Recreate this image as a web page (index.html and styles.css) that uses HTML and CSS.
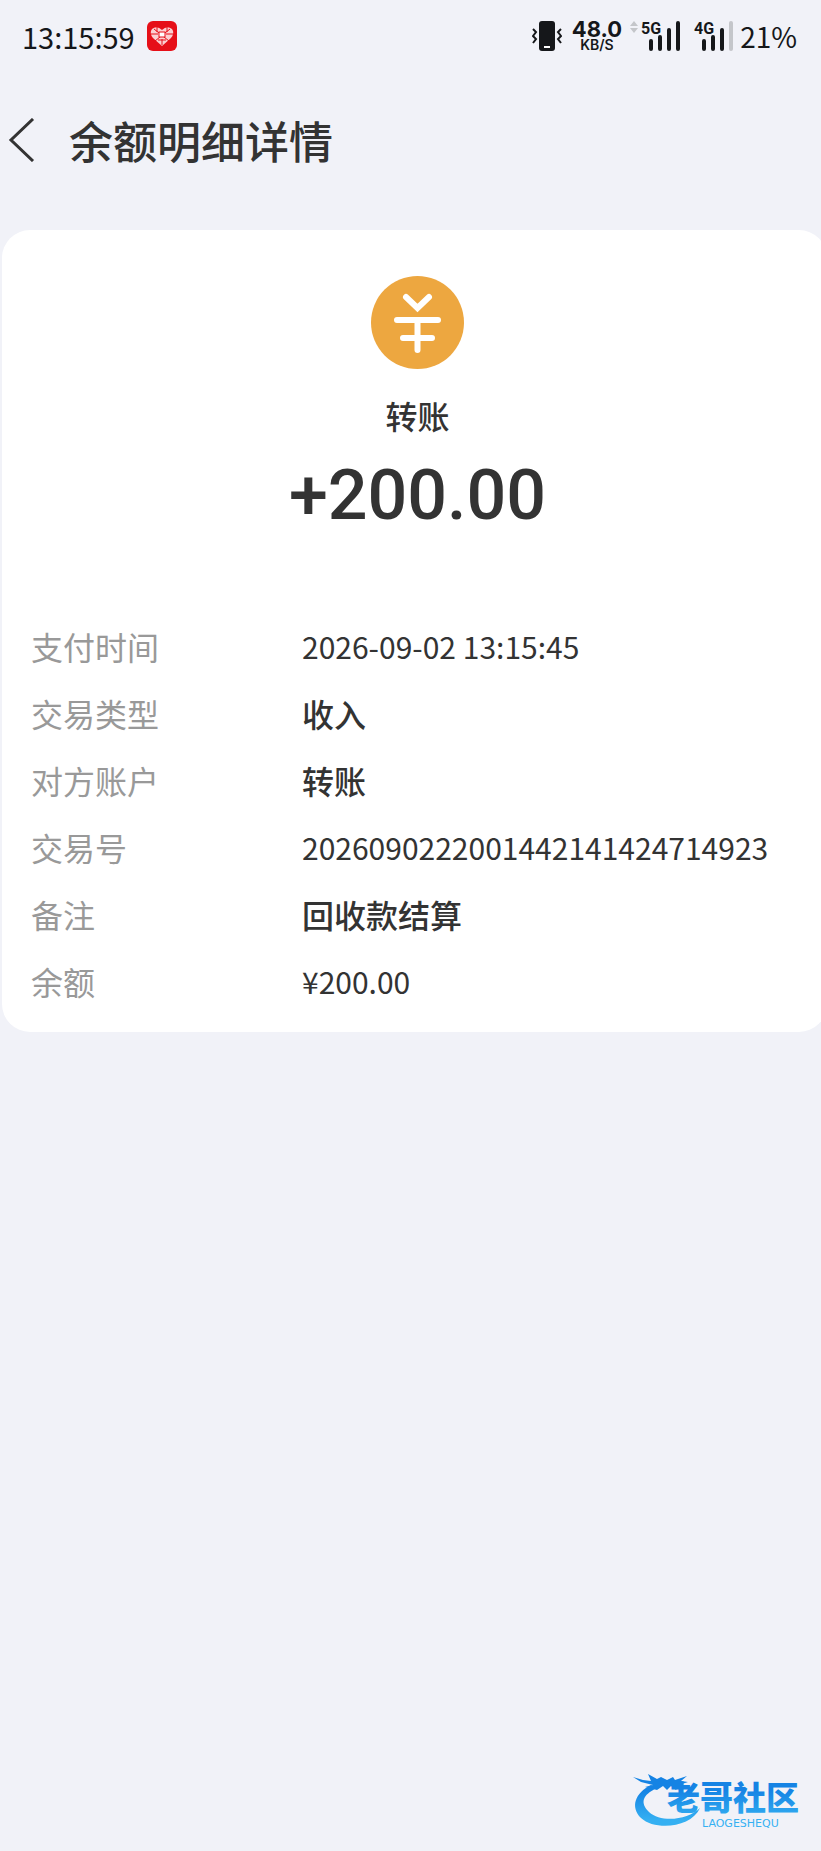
FILE: index.html
```html
<!DOCTYPE html>
<html lang="zh-CN">
<head>
  <meta charset="UTF-8" />
  <meta name="viewport" content="width=device-width, initial-scale=1.0" />
  <title>余额明细详情</title>
  <link rel="stylesheet" href="styles.css">
</head>
<body>

<div class="status-bar">
  <div class="status-left">
    <span class="clock">13:15:59</span>
    <svg class="app-icon" viewBox="0 0 30 30" aria-hidden="true">
      <rect width="30" height="30" rx="6" fill="#e60f18"/>
      <path d="M15 25 L6 17 Q2 12 5 8 Q10 4 15 9 Q20 4 25 8 Q28 12 24 17 Z" fill="#fbd0d2"/>
      <path d="M7 8 L22 20 M23 8 L8 20 M4 13 H11 M19 13 H26 M10 6 V11 M20 6 V11 M11 19 H19 M15 18 V24" stroke="#e60f18" stroke-width="1"/>
      <rect x="12" y="11" width="6" height="5" fill="#fff" stroke="#e60f18" stroke-width="1"/>
    </svg>
  </div>
  <div class="status-right">
    <svg class="vibrate" viewBox="0 0 30 30" aria-hidden="true">
      <rect x="7" y="0" width="16" height="30" rx="3" fill="#15171a"/>
      <rect x="12" y="25" width="6" height="2" fill="#fff"/>
      <path d="M1 8 L4 11 L1 15 L4 18 L1 22 M29 8 L26 11 L29 15 L26 18 L29 22" fill="none" stroke="#15171a" stroke-width="2"/>
    </svg>
    <div class="speed">
      <span class="speed-value">48.0</span>
      <span class="speed-unit">KB/S</span>
    </div>
    <svg class="signal" viewBox="0 0 52 30" aria-hidden="true">
      <path d="M0 5 L4 0 L8 5 Z M0 7 L4 12 L8 7 Z" fill="#c4c6ca"/>
      <text x="11" y="13">5G</text>
      <path d="M21 20 V28 M30 16 V28 M39 9 V28 M48 2 V28" class="bar"/>
    </svg>
    <svg class="signal signal-4g" viewBox="0 0 40 30" aria-hidden="true">
      <text x="0" y="13">4G</text>
      <path d="M10 20 V28 M19 16 V28 M28 9 V28" class="bar"/>
      <path d="M37 2 V28" class="bar bar-off"/>
    </svg>
    <span class="battery">21%</span>
  </div>
</div>

<header>
  <button class="back" type="button" aria-label="返回">
    <svg viewBox="0 0 28 44" aria-hidden="true">
      <path d="M26 1 L4 22 L26 43" fill="none" stroke="#333" stroke-width="3"/>
    </svg>
  </button>
  <h1>余额明细详情</h1>
</header>

<main class="card">
  <div class="summary">
    <svg class="yuan" viewBox="0 0 93 93" aria-hidden="true">
      <circle cx="46.500" cy="46.500" r="46.500" fill="#eda740"/>
      <path d="M35 21 L46.500 32 L58 21 M26 44 H67 M32 62 H61 M46.500 44 V74" fill="none" stroke="#fff" stroke-width="6" stroke-linecap="round"/>
    </svg>
    <p class="kind">转账</p>
    <p class="amount">+200.00</p>
  </div>

  <dl class="details">
    <dt>支付时间</dt>
    <dd class="num">2026-09-02 13:15:45</dd>
    <dt>交易类型</dt>
    <dd>收入</dd>
    <dt>对方账户</dt>
    <dd>转账</dd>
    <dt>交易号</dt>
    <dd class="num">2026090222001442141424714923</dd>
    <dt>备注</dt>
    <dd>回收款结算</dd>
    <dt>余额</dt>
    <dd class="num">¥200.00</dd>
  </dl>
</main>

<footer>
  <svg class="watermark" viewBox="0 0 172 56" role="img" aria-label="老哥社区">
    <defs>
      <linearGradient id="blue" gradientUnits="userSpaceOnUse" x1="0" y1="0" x2="0" y2="56">
        <stop offset="0.3" stop-color="#1583e4"/>
        <stop offset="0.85" stop-color="#35b0f2"/>
      </linearGradient>
    </defs>
    <g fill="url(#blue)">
      <path d="M18 12 C2 20 -3 34 8 45 C22 58 58 55 67 35 C55 47 28 50 16 39 C7 30 9 22 24 15 Z"/>
      <path d="M0 4 L10 7 L18 8 L15 1 L24 6 L28 4 L34 7 L40 4 L42 7 L54 3 L48 8 L55 9 L49 11 L55 15 L46 13 L43 17 L38 13 L34 17 L30 13 L24 17 L12 14 L20 12 L8 9 Z"/>
      <text class="wm-name" x="34" y="37">老哥社区</text>
      <text class="wm-latin" x="69" y="54">LAOGESHEQU</text>
    </g>
  </svg>
</footer>

</body>
</html>
```

FILE: styles.css
```css
* {
  box-sizing: border-box;
}

body {
  margin: 0;
  min-height: 100vh;
  display: flex;
  flex-direction: column;
  overflow-x: hidden;
  background-color: #f1f2f8;
  color: #333;
  font-family: "Noto Sans CJK SC", sans-serif;
}

.status-bar {
  display: flex;
  justify-content: space-between;
  align-items: center;
  height: 72px;
  padding: 0 24px 0 22px;
  color: #15171a;
}

.status-left,
.status-right {
  display: flex;
  align-items: center;
}

.status-left {
  gap: 12px;
}

.clock {
  font-size: 29px;
}

.app-icon,
.vibrate {
  width: 30px;
  height: 30px;
}

.speed {
  display: flex;
  flex-direction: column;
  align-items: center;
  margin: 0 8px 0 10px;
  font-family: Inter, sans-serif;
  font-weight: 700;
}

.speed-value {
  font-size: 22px;
  line-height: 18px;
}

.speed-unit {
  font-size: 14px;
  font-weight: 600;
  line-height: 14px;
}

.signal {
  width: 52px;
  height: 30px;
  overflow: visible;
}

.signal-4g {
  width: 40px;
  margin: 0 6px 0 12px;
}

.signal text {
  font-family: Roboto, sans-serif;
  font-size: 16px;
  font-weight: 700;
  fill: #15171a;
}

.bar {
  fill: none;
  stroke: #15171a;
  stroke-width: 4;
  stroke-linecap: round;
}

.bar-off {
  stroke: #c4c6ca;
}

.battery {
  font-size: 28px;
}

header {
  display: flex;
  align-items: center;
  gap: 34px;
  height: 136px;
  padding: 0 7px;
}

.back {
  display: flex;
  padding: 0;
  border: 0;
  background: none;
  cursor: pointer;
}

.back svg {
  width: 28px;
  height: 44px;
}

h1 {
  margin: 0;
  font-size: 44px;
  font-weight: 500;
  line-height: 60px;
}

/* the card runs a little past the right edge */
.card {
  margin: 22px -6px 0 2px;
  padding: 46px 29px 18px;
  border-radius: 28px;
  background-color: #fff;
}

.summary {
  display: flex;
  flex-direction: column;
  align-items: center;
  padding-left: 6px;
}

.yuan {
  width: 93px;
  height: 93px;
}

.kind {
  margin: 22px 0 0;
  font-size: 32px;
  font-weight: 500;
  line-height: 48px;
}

.amount {
  margin: 16px 0 0;
  font-family: Roboto, sans-serif;
  font-size: 70px;
  font-weight: 500;
  line-height: 80px;
}

.details {
  display: grid;
  grid-template-columns: 271px 1fr;
  grid-auto-rows: 67px;
  align-items: center;
  margin: 77px 0 0;
  font-size: 32px;
}

.details dt {
  color: #999;
}

.details dd {
  margin: 0;
  font-weight: 500;
}

.details .num {
  font-size: 30px;
  font-weight: 400;
}

footer {
  display: flex;
  justify-content: flex-end;
  margin-top: auto;
  padding: 0 16px 22px;
}

.watermark {
  width: 172px;
  height: 56px;
  overflow: visible;
}

.wm-name {
  font-size: 33px;
  font-weight: 900;
}

.wm-latin {
  font-family: "DejaVu Sans", sans-serif;
  font-size: 11px;
}
```
